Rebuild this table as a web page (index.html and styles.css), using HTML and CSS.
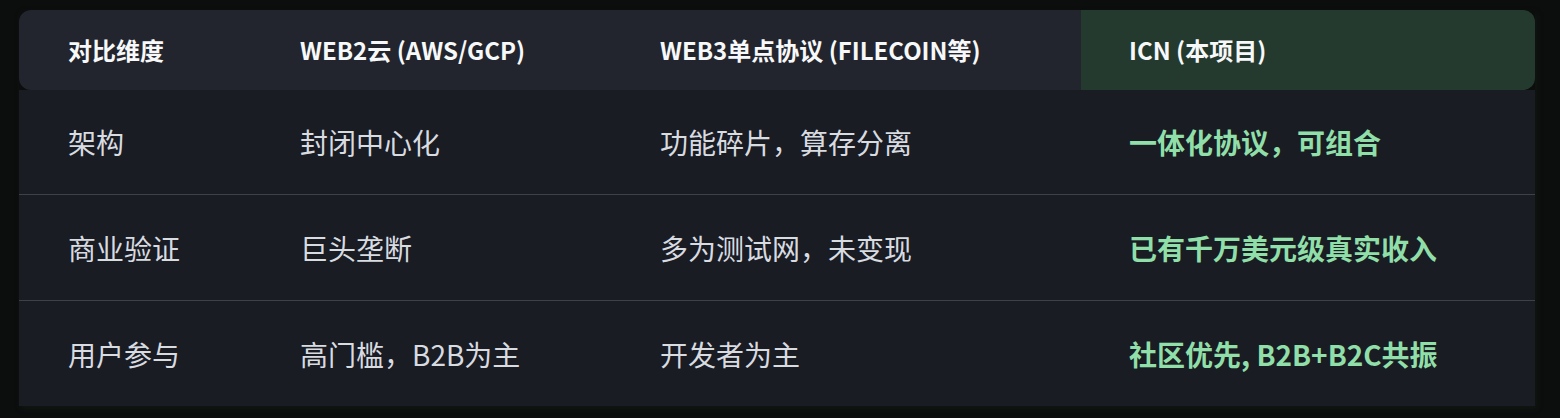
FILE: index.html
```html
<!DOCTYPE html>
<html lang="zh-CN">
<head>
<meta charset="utf-8">
<link rel="stylesheet" href="styles.css">
</head>
<body>
<div class="wrap">
  <table class="cmp">
    <colgroup>
      <col class="c1"><col class="c2"><col class="c3"><col class="c4">
    </colgroup>
    <thead>
      <tr>
        <th>对比维度</th>
        <th>Web2云 (AWS/GCP)</th>
        <th>Web3单点协议 (Filecoin等)</th>
        <th class="hl">ICN (本项目)</th>
      </tr>
    </thead>
    <tbody>
      <tr>
        <td>架构</td>
        <td>封闭中心化</td>
        <td>功能碎片，算存分离</td>
        <td class="win">一体化协议，可组合</td>
      </tr>
      <tr>
        <td>商业验证</td>
        <td>巨头垄断</td>
        <td>多为测试网，未变现</td>
        <td class="win">已有千万美元级真实收入</td>
      </tr>
      <tr>
        <td>用户参与</td>
        <td>高门槛，B2B为主</td>
        <td>开发者为主</td>
        <td class="win">社区优先, B2B+B2C共振</td>
      </tr>
    </tbody>
  </table>
</div>
</body>
</html>
```
FILE: styles.css
```css
html, body {
  margin: 0;
  padding: 0;
  background: #0b0e0c;
}
body {
  font-family: "Noto Sans CJK SC", "Noto Sans", sans-serif;
  width: 1560px;
  height: 418px;
  overflow: hidden;
}
.wrap {
  padding: 10px 0 0 19px;
}
.cmp {
  width: 1516px;
  border-collapse: separate;
  border-spacing: 0;
  table-layout: fixed;
  box-shadow: 2px 3px 6px rgba(40, 48, 44, 0.25);
}
.c1 { width: 233px; }
.c2 { width: 360px; }
.c3 { width: 469px; }
.c4 { width: 454px; }
.cmp th {
  height: 80px;
  padding: 0 0 0 48px;
  text-align: left;
  background: #22252d;
  color: #f7f8f9;
  font-size: 24px;
  font-weight: 700;
  text-transform: uppercase;
  line-height: 1;
  vertical-align: middle;
}
.cmp th:first-child {
  border-radius: 12px 0 0 12px;
  padding-left: 49px;
}
.cmp th.hl {
  background: #253a2f;
  border-radius: 0 12px 12px 0;
}
.cmp td {
  height: 104px;
  padding: 0 0 0 48px;
  background: #191c23;
  color: #d8dbe0;
  font-size: 28px;
  font-weight: 400;
  line-height: 1;
  vertical-align: middle;
}
.cmp td:first-child {
  padding-left: 49px;
}
.cmp tbody tr + tr td {
  border-top: 1px solid #3d4148;
  height: 105px;
}
.cmp td.win {
  color: #90dea8;
  font-weight: 700;
}
```
